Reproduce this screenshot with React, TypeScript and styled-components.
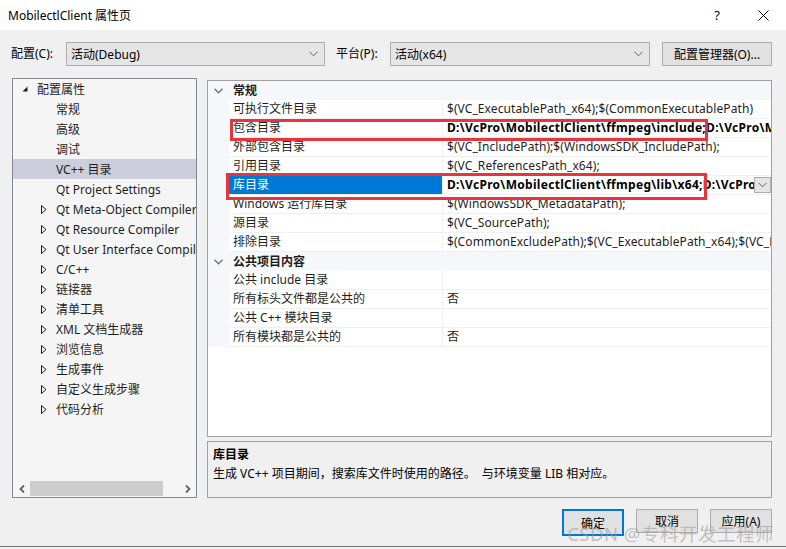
import React from "react";
import styled, { createGlobalStyle } from "styled-components";

const FONT = `"Noto Sans", "Noto Sans CJK SC", sans-serif`;

const GlobalStyle = createGlobalStyle`
  html, body { margin: 0; padding: 0; background: #f0f0f0; }
  body { font-family: ${FONT}; font-size: 12px; color: #1e1e1e; }
  * { box-sizing: border-box; }
`;

const Window = styled.div`
  position: relative;
  width: 786px;
  height: 547px;
  background: #f0f0f0;
  border-bottom: 1px solid #707070;
  display: flex;
  flex-direction: column;
  overflow: hidden;
`;

const TitleBar = styled.div`
  height: 30px;
  flex: none;
  background: #fff;
  display: flex;
  align-items: center;
  padding-left: 8px;
`;

const Title = styled.div`
  flex: 1;
  color: #000;
  font-size: 12px;
`;

const CaptionButton = styled.div`
  width: 46px;
  height: 30px;
  display: flex;
  align-items: center;
  justify-content: center;
  color: #000;
  font-size: 13px;
`;

const Toolbar = styled.div`
  height: 48px;
  flex: none;
  display: flex;
  align-items: flex-start;
  padding: 12px 14px 0 11px;
`;

const FieldLabel = styled.div<{ $w: number; $ml?: number }>`
  width: ${(p) => p.$w}px;
  margin-left: ${(p) => p.$ml ?? 0}px;
  height: 24px;
  line-height: 24px;
  color: #000;
`;

const Select = styled.div<{ $w: number }>`
  width: ${(p) => p.$w}px;
  height: 24px;
  border: 1px solid #adadad;
  background: #e5e5e5;
  display: flex;
  align-items: center;
  padding: 0 6px 0 4px;
  color: #000;
`;

const SelectText = styled.span`
  flex: 1;
`;

const PushButton = styled.div<{ $w: number; $ml?: number; $default?: boolean }>`
  width: ${(p) => p.$w}px;
  margin-left: ${(p) => p.$ml ?? 0}px;
  height: ${(p) => (p.$default ? 27 : 24)}px;
  border: ${(p) => (p.$default ? "2px solid #0078d7" : "1px solid #adadad")};
  background: #e1e1e1;
  display: flex;
  align-items: center;
  justify-content: center;
  color: #000;
`;

const Main = styled.div`
  display: flex;
  gap: 10px;
  padding: 0 14px 0 12px;
  height: 420px;
  flex: none;
`;

const TreePanel = styled.div`
  width: 185px;
  border: 1px solid #828790;
  background: #f5f5f5;
  display: flex;
  flex-direction: column;
`;

const TreeList = styled.div`
  flex: 1;
  overflow: hidden;
`;

const TreeRow = styled.div<{ $level: number; $selected?: boolean }>`
  height: 20px;
  display: flex;
  align-items: center;
  padding-left: ${(p) => (p.$level === 0 ? 9 : 28)}px;
  background: ${(p) => (p.$selected ? "#cccedb" : "transparent")};
  white-space: nowrap;
  color: #1e1e1e;
`;

const Toggle = styled.span`
  width: 15px;
  flex: none;
  display: flex;
  align-items: center;
`;

const HScroll = styled.div`
  height: 17px;
  flex: none;
  display: flex;
  align-items: center;
`;

const ScrollArrow = styled.div`
  width: 17px;
  height: 17px;
  flex: none;
  display: flex;
  align-items: center;
  justify-content: center;
`;

const ScrollTrack = styled.div`
  flex: 1;
  height: 15px;
  display: flex;
`;

const ScrollThumb = styled.div`
  width: 133px;
  height: 100%;
  background: #cdcdcd;
`;

const RightCol = styled.div`
  flex: 1;
  display: flex;
  flex-direction: column;
  gap: 4px;
  padding-top: 2px;
`;

const Grid = styled.div`
  position: relative;
  height: 357px;
  flex: none;
  background: #fff;
  border: 1px solid #a0a0a0;
  overflow: hidden;
`;

const GridRow = styled.div`
  display: grid;
  grid-template-columns: 21px 214px 1fr;
  height: 19px;
`;

const Gutter = styled.div`
  background: #f5f7fa;
  display: flex;
  align-items: center;
  justify-content: center;
`;

const CategoryName = styled.div`
  grid-column: 2 / 4;
  background: #f5f7fa;
  font-weight: bold;
  padding-left: 4px;
  line-height: 19px;
  color: #1e1e1e;
`;

const NameCell = styled.div<{ $selected?: boolean }>`
  border-bottom: 1px solid #f0f0f0;
  border-right: 1px solid #f0f0f0;
  padding-left: 4px;
  line-height: 18px;
  white-space: nowrap;
  overflow: hidden;
  background: ${(p) => (p.$selected ? "#0078d7" : "#fff")};
  color: ${(p) => (p.$selected ? "#fff" : "#1e1e1e")};
`;

const ValueCell = styled.div`
  border-bottom: 1px solid #f0f0f0;
  display: flex;
  align-items: center;
  min-width: 0;
`;

const ValueText = styled.div<{ $bold?: boolean }>`
  flex: 1;
  padding-left: 4px;
  line-height: 18px;
  white-space: nowrap;
  overflow: hidden;
  font-weight: ${(p) => (p.$bold ? "bold" : "normal")};
  letter-spacing: ${(p) => (p.$bold ? "0.3px" : "0.08px")};
  color: ${(p) => (p.$bold ? "#000" : "#1e1e1e")};
`;

const DropButton = styled.div`
  width: 17px;
  height: 16px;
  flex: none;
  border: 1px solid #adadad;
  background: #e5e5e5;
  display: flex;
  align-items: center;
  justify-content: center;
`;

const Highlight = styled.div`
  position: absolute;
  border: 3px solid #e8343c;
  pointer-events: none;
`;

const Desc = styled.div`
  flex: 1;
  border: 1px solid #a0a0a0;
  background: #f0f0f0;
  padding: 3px 5px;
  color: #000;
`;

const DescTitle = styled.div`
  font-weight: bold;
  line-height: 19px;
`;

const DescText = styled.div`
  line-height: 19px;
  white-space: pre;
`;

const Footer = styled.div`
  display: flex;
  justify-content: flex-end;
  align-items: flex-start;
  gap: 12px;
  padding: 11px 14px 0 0;
`;

const Watermark = styled.div`
  position: absolute;
  right: 12px;
  bottom: 0px;
  font-size: 18.5px;
  color: rgba(150, 150, 150, 0.55);
  white-space: nowrap;
  pointer-events: none;
  letter-spacing: 0.5px;
`;

const Chevron = () => (
  <svg width="9" height="6" viewBox="0 0 9 6">
    <polyline points="0.5,0.8 4.5,4.8 8.5,0.8" fill="none" stroke="#606060" strokeWidth="1" />
  </svg>
);

const Expanded = () => (
  <svg width="6" height="6" viewBox="0 0 6 6">
    <polygon points="5.5,0.5 5.5,5.5 0.5,5.5" fill="#1e1e1e" />
  </svg>
);

const Collapsed = () => (
  <svg width="6" height="9" viewBox="0 0 6 9">
    <polygon points="0.5,0.5 5,4.5 0.5,8.5" fill="none" stroke="#1e1e1e" strokeWidth="1" />
  </svg>
);

const CatChevron = () => (
  <svg width="9" height="6" viewBox="0 0 9 6">
    <polyline points="0.5,0.8 4.5,4.8 8.5,0.8" fill="none" stroke="#717171" strokeWidth="1.3" />
  </svg>
);

const ArrowLeft = () => (
  <svg width="6" height="8" viewBox="0 0 6 8">
    <polyline points="5,0.5 1.5,4 5,7.5" fill="none" stroke="#606060" strokeWidth="1.8" />
  </svg>
);

const ArrowRight = () => (
  <svg width="6" height="8" viewBox="0 0 6 8">
    <polyline points="1,0.5 4.5,4 1,7.5" fill="none" stroke="#606060" strokeWidth="1.8" />
  </svg>
);

const CloseIcon = () => (
  <svg width="11" height="11" viewBox="0 0 11 11">
    <path d="M0.5 0.5 L10.5 10.5 M10.5 0.5 L0.5 10.5" stroke="#000" strokeWidth="1" />
  </svg>
);

type TreeItem = { label: string; level: number; toggle?: "open" | "closed"; selected?: boolean };

const treeItems: TreeItem[] = [
  { label: "配置属性", level: 0, toggle: "open" },
  { label: "常规", level: 1 },
  { label: "高级", level: 1 },
  { label: "调试", level: 1 },
  { label: "VC++ 目录", level: 1, selected: true },
  { label: "Qt Project Settings", level: 1 },
  { label: "Qt Meta-Object Compiler", level: 1, toggle: "closed" },
  { label: "Qt Resource Compiler", level: 1, toggle: "closed" },
  { label: "Qt User Interface Compiler", level: 1, toggle: "closed" },
  { label: "C/C++", level: 1, toggle: "closed" },
  { label: "链接器", level: 1, toggle: "closed" },
  { label: "清单工具", level: 1, toggle: "closed" },
  { label: "XML 文档生成器", level: 1, toggle: "closed" },
  { label: "浏览信息", level: 1, toggle: "closed" },
  { label: "生成事件", level: 1, toggle: "closed" },
  { label: "自定义生成步骤", level: 1, toggle: "closed" },
  { label: "代码分析", level: 1, toggle: "closed" },
];

type Prop = { name: string; value: string; bold?: boolean; selected?: boolean };
type Section = { title: string; props: Prop[] };

const sections: Section[] = [
  {
    title: "常规",
    props: [
      { name: "可执行文件目录", value: "$(VC_ExecutablePath_x64);$(CommonExecutablePath)" },
      { name: "包含目录", value: "D:\\VcPro\\MobilectlClient\\ffmpeg\\include;D:\\VcPro\\MobilectlClient\\include", bold: true },
      { name: "外部包含目录", value: "$(VC_IncludePath);$(WindowsSDK_IncludePath);" },
      { name: "引用目录", value: "$(VC_ReferencesPath_x64);" },
      { name: "库目录", value: "D:\\VcPro\\MobilectlClient\\ffmpeg\\lib\\x64;D:\\VcPro\\MobilectlClient\\lib", bold: true, selected: true },
      { name: "Windows 运行库目录", value: "$(WindowsSDK_MetadataPath);" },
      { name: "源目录", value: "$(VC_SourcePath);" },
      { name: "排除目录", value: "$(CommonExcludePath);$(VC_ExecutablePath_x64);$(VC_LibraryPath_x64)" },
    ],
  },
  {
    title: "公共项目内容",
    props: [
      { name: "公共 include 目录", value: "" },
      { name: "所有标头文件都是公共的", value: "否" },
      { name: "公共 C++ 模块目录", value: "" },
      { name: "所有模块都是公共的", value: "否" },
    ],
  },
];

export default function App() {
  return (
    <>
      <GlobalStyle />
      <Window>
        <TitleBar>
          <Title>MobilectlClient 属性页</Title>
          <CaptionButton>?</CaptionButton>
          <CaptionButton>
            <CloseIcon />
          </CaptionButton>
        </TitleBar>

        <Toolbar>
          <FieldLabel $w={55}>配置(C):</FieldLabel>
          <Select $w={259}>
            <SelectText>活动(Debug)</SelectText>
            <Chevron />
          </Select>
          <FieldLabel $w={54} $ml={11}>平台(P):</FieldLabel>
          <Select $w={260}>
            <SelectText>活动(x64)</SelectText>
            <Chevron />
          </Select>
          <PushButton $w={110} $ml={12}>配置管理器(O)...</PushButton>
        </Toolbar>

        <Main>
          <TreePanel>
            <TreeList>
              {treeItems.map((it) => (
                <TreeRow key={it.label} $level={it.level} $selected={it.selected}>
                  <Toggle>
                    {it.toggle === "open" && <Expanded />}
                    {it.toggle === "closed" && <Collapsed />}
                  </Toggle>
                  {it.label}
                </TreeRow>
              ))}
            </TreeList>
            <HScroll>
              <ScrollArrow>
                <ArrowLeft />
              </ScrollArrow>
              <ScrollTrack>
                <ScrollThumb />
              </ScrollTrack>
              <ScrollArrow>
                <ArrowRight />
              </ScrollArrow>
            </HScroll>
          </TreePanel>

          <RightCol>
            <Grid>
              {sections.map((s) => (
                <React.Fragment key={s.title}>
                  <GridRow>
                    <Gutter>
                      <CatChevron />
                    </Gutter>
                    <CategoryName>{s.title}</CategoryName>
                  </GridRow>
                  {s.props.map((p) => (
                    <GridRow key={p.name}>
                      <Gutter />
                      <NameCell $selected={p.selected}>{p.name}</NameCell>
                      <ValueCell>
                        <ValueText $bold={p.bold}>{p.value}</ValueText>
                        {p.selected && (
                          <DropButton>
                            <Chevron />
                          </DropButton>
                        )}
                      </ValueCell>
                    </GridRow>
                  ))}
                </React.Fragment>
              ))}
              <Highlight style={{ left: 22, top: 38, width: 478, height: 22 }} />
              <Highlight style={{ left: 18, top: 92, width: 481, height: 27 }} />
            </Grid>
            <Desc>
              <DescTitle>库目录</DescTitle>
              <DescText>生成 VC++ 项目期间，搜索库文件时使用的路径。  与环境变量 LIB 相对应。</DescText>
            </Desc>
          </RightCol>
        </Main>

        <Footer>
          <PushButton $w={62} $default>确定</PushButton>
          <PushButton $w={62}>取消</PushButton>
          <PushButton $w={62}>应用(A)</PushButton>
        </Footer>
        <Watermark>CSDN @专科开发工程师</Watermark>
      </Window>
    </>
  );
}
